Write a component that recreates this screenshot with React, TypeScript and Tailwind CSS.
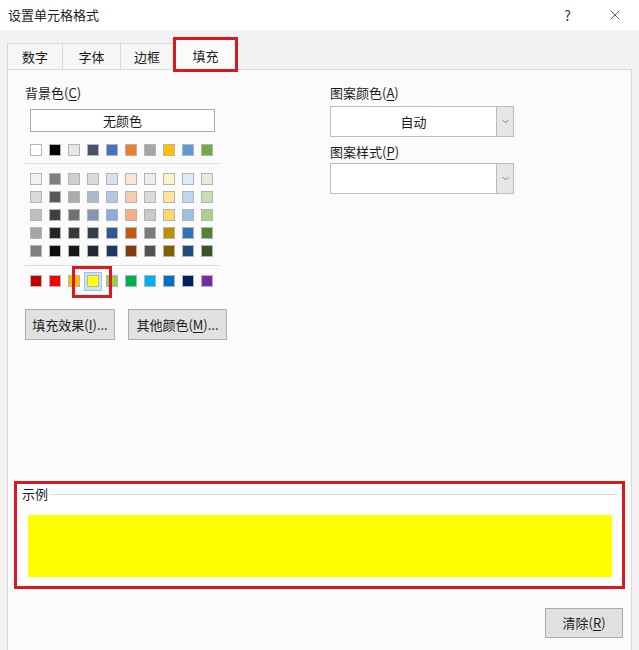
import { ChevronDown, X } from "lucide-react";

const themeRow = [
  "bg-[#ffffff]",
  "bg-[#000000]",
  "bg-[#e7e6e6]",
  "bg-[#44546a]",
  "bg-[#4472c4]",
  "bg-[#ed7d31]",
  "bg-[#a5a5a5]",
  "bg-[#ffc000]",
  "bg-[#5b9bd5]",
  "bg-[#70ad47]",
];

const tintRows = [
  ["bg-[#f2f2f2]", "bg-[#7f7f7f]", "bg-[#d0cece]", "bg-[#d6dce4]", "bg-[#d9e1f2]", "bg-[#fce4d6]", "bg-[#ededed]", "bg-[#fff2cc]", "bg-[#ddebf7]", "bg-[#e2efda]"],
  ["bg-[#d9d9d9]", "bg-[#595959]", "bg-[#aeaaaa]", "bg-[#adb9ca]", "bg-[#b4c6e7]", "bg-[#f8cbad]", "bg-[#dbdbdb]", "bg-[#ffe699]", "bg-[#bdd7ee]", "bg-[#c6e0b4]"],
  ["bg-[#bfbfbf]", "bg-[#404040]", "bg-[#757171]", "bg-[#8497b0]", "bg-[#8ea9db]", "bg-[#f4b084]", "bg-[#c9c9c9]", "bg-[#ffd966]", "bg-[#9bc2e6]", "bg-[#a9d08e]"],
  ["bg-[#a6a6a6]", "bg-[#262626]", "bg-[#3a3838]", "bg-[#333f4f]", "bg-[#305496]", "bg-[#c65911]", "bg-[#7b7b7b]", "bg-[#bf8f00]", "bg-[#2f75b5]", "bg-[#548235]"],
  ["bg-[#808080]", "bg-[#0d0d0d]", "bg-[#171616]", "bg-[#222b35]", "bg-[#203764]", "bg-[#833c0c]", "bg-[#525252]", "bg-[#806000]", "bg-[#1f4e78]", "bg-[#375623]"],
];

const standardRow = [
  "bg-[#c00000]",
  "bg-[#ff0000]",
  "bg-[#ffc000]",
  "bg-[#ffff00]",
  "bg-[#92d050]",
  "bg-[#00b050]",
  "bg-[#00b0f0]",
  "bg-[#0070c0]",
  "bg-[#002060]",
  "bg-[#7030a0]",
];

const tabs = ["数字", "字体", "边框"];

const Swatch = ({ color, selected }: { color: string; selected?: boolean }) => (
  <div className="relative w-[12px] h-[12px]">
    {selected && (
      <>
        <span className="absolute -left-[3px] -top-[3px] w-[18px] h-[19px] bg-[#cde3f5] border border-[#99c4e8]" />
        <span className="absolute -left-[15px] -top-[9px] w-[40px] h-[32px] border-[3px] border-[#d71920] z-10" />
      </>
    )}
    <div className={`relative w-[12px] h-[12px] border border-[#b4b4b4] ${color}`} />
  </div>
);

const SwatchRow = ({ colors, selectedIndex }: { colors: string[]; selectedIndex?: number }) => (
  <div className="flex gap-[7px] pl-[5px]">
    {colors.map((c, i) => (
      <Swatch key={i} color={c} selected={i === selectedIndex} />
    ))}
  </div>
);

const Label = ({ text, mnemonic }: { text: string; mnemonic: string }) => (
  <span>
    {text}(<span className="underline underline-offset-2">{mnemonic}</span>)
  </span>
);

const Select = ({ value }: { value?: string }) => (
  <div className="flex w-[184px] h-[31px] border border-[#bcbcbc] bg-white">
    <div className="flex-1 flex items-center justify-center">{value}</div>
    <div className="w-[17px] flex items-center justify-center bg-[#e6e6e6] border-l border-[#bcbcbc]">
      <ChevronDown size={11} strokeWidth={1.5} className="text-[#555]" />
    </div>
  </div>
);

const Button = ({ children, className }: { children: React.ReactNode; className: string }) => (
  <div
    className={`flex items-center justify-center bg-[#e1e1e1] border border-[#adadad] ${className}`}
  >
    {children}
  </div>
);

export default function App() {
  return (
    <div className="w-[639px] h-[650px] flex flex-col overflow-hidden bg-[#f2f2f2] text-[13px] leading-[18px] text-[#1b1b1b] font-['Microsoft_YaHei_UI','Noto_Sans_CJK_SC',sans-serif]">
      {/* title bar */}
      <div className="h-[30px] shrink-0 flex items-center bg-white pl-[8px] pr-[16px]">
        <span className="text-[#222]">设置单元格格式</span>
        <span className="ml-auto mr-[36px] text-[14px] text-[#333]">?</span>
        <X size={16} strokeWidth={1.2} className="text-[#333]" />
      </div>

      {/* tabs */}
      <div className="h-[39px] shrink-0 flex items-end pl-[7px]">
        {tabs.map((t, i) => (
          <div
            key={t}
            className={`h-[26px] flex items-center justify-center border-t border-l border-[#d9d9d9] bg-[#f6f6f6] ${
              i === 0 ? "w-[55px]" : i === 1 ? "w-[58px]" : "w-[53px]"
            }`}
          >
            {t}
          </div>
        ))}
        <div className="relative z-10 -mb-[3px] w-[65px] h-[35px] flex items-center justify-center pt-[2px] bg-[#fbfbfb] border-[3px] border-[#d71920]">
          填充
        </div>
      </div>

      {/* panel */}
      <div className="flex-1 mx-[7px] flex flex-col bg-[#fbfbfb] border border-b-0 border-[#d9d9d9]">
        <div className="flex pl-[17px] pt-[14px]">
          {/* left column */}
          <div className="w-[305px] flex flex-col">
            <Label text="背景色" mnemonic="C" />
            <div className="mt-[7px] ml-[5px] w-[185px] h-[23px] flex items-center justify-center bg-white border border-[#a9a9a9]">
              无颜色
            </div>
            <div className="mt-[12px]">
              <SwatchRow colors={themeRow} />
            </div>
            <div className="mt-[7px] w-[194px] h-px bg-[#dcdcdc]" />
            <div className="mt-[9px] flex flex-col gap-[6px]">
              {tintRows.map((r, i) => (
                <SwatchRow key={i} colors={r} />
              ))}
            </div>
            <div className="mt-[8px] w-[194px] h-px bg-[#dcdcdc]" />
            <div className="mt-[9px]">
              <SwatchRow colors={standardRow} selectedIndex={3} />
            </div>
            <div className="mt-[22px] flex gap-[13px]">
              <Button className="w-[90px] h-[31px]">
                <span>
                  填充效果(<span className="underline underline-offset-2">I</span>)...
                </span>
              </Button>
              <Button className="w-[99px] h-[31px]">
                <span>
                  其他颜色(<span className="underline underline-offset-2">M</span>)...
                </span>
              </Button>
            </div>
          </div>

          {/* right column */}
          <div className="flex flex-col">
            <Label text="图案颜色" mnemonic="A" />
            <div className="mt-[4px]">
              <Select value="自动" />
            </div>
            <div className="mt-[6px]">
              <Label text="图案样式" mnemonic="P" />
            </div>
            <div className="mt-[2px]">
              <Select />
            </div>
          </div>
        </div>

        {/* sample group */}
        <div className="mt-[141px] mx-[6px] h-[108px] flex flex-col border-[3px] border-[#d71920] bg-white">
          <div className="flex items-center pl-[5px] pr-[4px] pt-[1px]">
            <span>示例</span>
            <div className="flex-1 h-px bg-[#dcdcdc] ml-[2px]" />
          </div>
          <div className="mt-[12px] ml-[11px] mr-[10px] h-[62px] bg-[#ffff00]" />
        </div>

        <div className="mt-[19px] flex justify-end pr-[8px]">
          <Button className="w-[78px] h-[30px]">
            <Label text="清除" mnemonic="R" />
          </Button>
        </div>
      </div>
    </div>
  );
}
